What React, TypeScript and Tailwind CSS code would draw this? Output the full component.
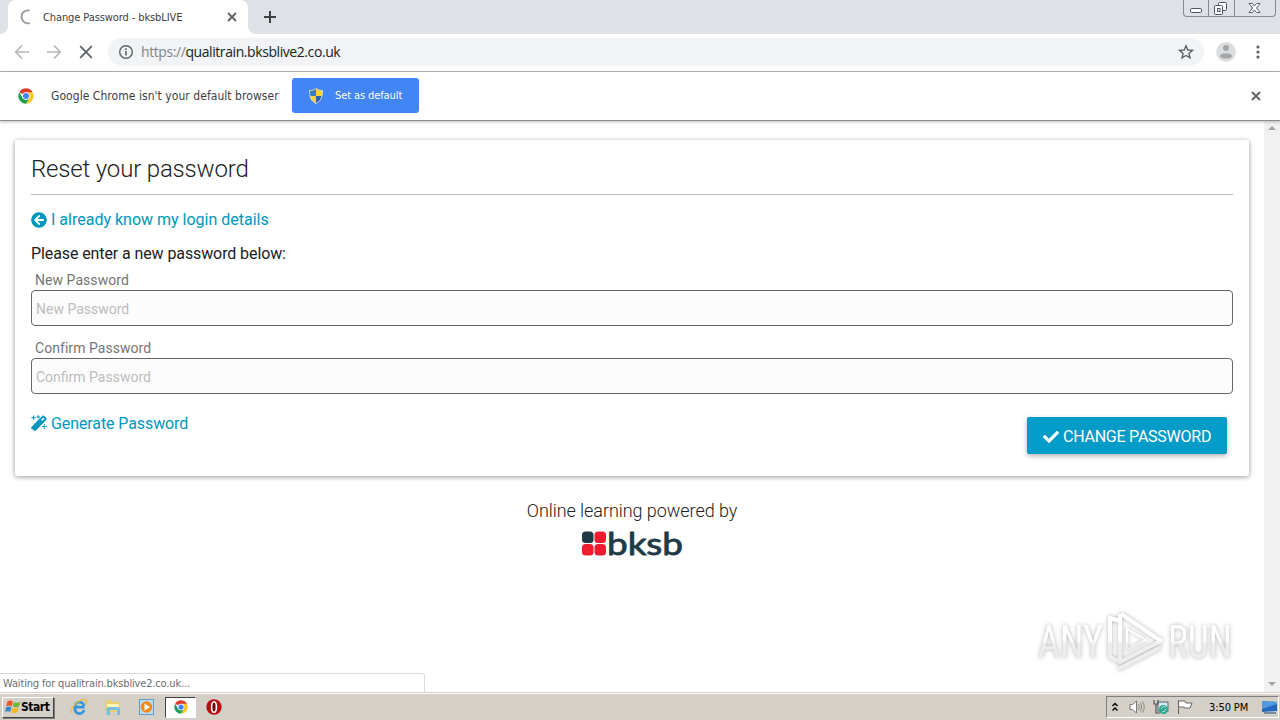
import React from 'react';
import { FaArrowCircleLeft, FaCheck } from 'react-icons/fa';

const ChromeLogo: React.FC<{ className?: string }> = ({ className }) => (
  <svg viewBox="0 0 48 48" className={className}>
    <circle cx="24" cy="24" r="23" fill="#fff" />
    <path d="M24 24 L4.1 12.5 A23 23 0 0 1 43.9 12.5 Z" fill="#dd3b2e" />
    <path d="M24 12.5 H43.9 A23 23 0 0 1 24 47 L34 29.7 Z" fill="#fbc91d" />
    <path d="M4.1 12.5 L14 29.7 L24 35.5 L34 29.7 L24 47 A23 23 0 0 1 4.1 12.5 Z" fill="#1f9d55" />
    <circle cx="24" cy="24" r="11.5" fill="#fff" />
    <circle cx="24" cy="24" r="9" fill="#4285f4" />
  </svg>
);

const ShieldIcon: React.FC = () => (
  <svg viewBox="0 0 16 16" className="w-4 h-4">
    <path d="M8 .5 C6 2 4 2.4 1.5 2.5 C1.4 9 3.2 13 8 15.5 Z" fill="#2f7fc8" />
    <path d="M8 .5 C10 2 12 2.4 14.5 2.5 C14.6 9 12.8 13 8 15.5 Z" fill="#f5d33b" />
    <path d="M8 8 H1.9 C2.5 11.5 4.4 13.8 8 15.5 Z" fill="#f5d33b" />
    <path d="M8 8 H14.1 C13.5 11.5 11.6 13.8 8 15.5 Z" fill="#2267b0" />
    <path d="M8 .5 C6 2 4 2.4 1.5 2.5 C1.4 9 3.2 13 8 15.5 C12.8 13 14.6 9 14.5 2.5 C12 2.4 10 2 8 .5 Z" fill="none" stroke="#d4d9c8" />
  </svg>
);

const MagicIcon: React.FC = () => (
  <svg viewBox="0 0 16 16" className="w-4 h-4 mr-1 mb-[2px]">
    <path d="M0 12.5 L11.3 0.8 Q12.3 0 13.1 0.8 L15.3 3 Q16 3.8 15.3 4.8 L5 15.6 Q4 16.4 3 15.6 L0.4 13.6 Z" fill="#0097bf" />
    <path d="M10 4.7 L12.2 2.5 L13.5 3.8 L11.3 6 Z" fill="#fff" />
    <path d="M2.6 .5 V5 M.4 2.7 H4.9 M7.2 0 V3.5 M5.5 2 H9 M13.3 9 V14 M10.9 11.5 H15.8" stroke="#0097bf" strokeWidth="1" />
  </svg>
);

const CloseIcon: React.FC<{ className?: string }> = ({ className }) => (
  <svg viewBox="0 0 10 10" className={className}>
    <path d="M1 1 L9 9 M9 1 L1 9" stroke="currentColor" strokeWidth="1.9" />
  </svg>
);

const TabStrip: React.FC = () => (
  <div className="flex h-[34px] bg-[#dee1e6] justify-between">
    <div className="flex">
      <div className="w-2 bg-white">
        <div className="w-2 h-[34px] bg-[#dee1e6] rounded-br-lg" />
      </div>
      <div className="flex items-center w-[240px] bg-white rounded-t-lg pl-3 pr-[11px]">
        <svg viewBox="0 0 16 16" className="w-4 h-4 shrink-0">
          <path d="M9.5 1.5 A6.5 6.5 0 1 0 10 14" fill="none" stroke="#999" strokeWidth="1.8" />
        </svg>
        <span className="ml-[7px] pt-[2px] flex-1 text-[11px] tracking-[-0.1px] text-[#3c4043] whitespace-nowrap">Change Password - bksbLIVE</span>
        <CloseIcon className="w-[10px] h-[10px] text-[#5f6368]" />
      </div>
      <div className="w-2 bg-white">
        <div className="w-2 h-[34px] bg-[#dee1e6] rounded-bl-lg" />
      </div>
      <svg viewBox="0 0 12 12" className="w-3 h-3 ml-2 mt-[11px]">
        <path d="M6 0 V12 M0 6 H12" stroke="#3c4043" strokeWidth="2" />
      </svg>
    </div>
    <div className="flex h-[17px] w-[93px] mr-1 border border-t-0 border-[#858b95] rounded-b-[4px] text-[#4b5563]">
      <div className="w-[25px] border-r border-[#858b95]">
        <svg viewBox="0 0 25 16" className="w-[25px] h-4">
          <rect x="6.5" y="8.5" width="11" height="4" rx="1" fill="#fff" stroke="currentColor" />
        </svg>
      </div>
      <div className="w-[26px] border-r border-[#858b95]">
        <svg viewBox="0 0 25 16" className="w-[25px] h-4">
          <rect x="9.5" y="2.5" width="8" height="8" rx="1" fill="#fff" stroke="currentColor" />
          <rect x="5.5" y="5.5" width="8" height="9" rx="1" fill="#fff" stroke="currentColor" />
          <rect x="8.5" y="8.5" width="2.5" height="3" fill="none" stroke="currentColor" />
        </svg>
      </div>
      <svg viewBox="0 0 40 16" className="w-10 h-4">
        <path d="M14 3.5 H17.5 L19.5 6 L21.5 3.5 H25 L21.5 8 L25 12.5 H21.5 L19.5 10 L17.5 12.5 H14 L17.5 8 Z" fill="#fff" stroke="currentColor" strokeWidth="0.9" />
      </svg>
    </div>
  </div>
);

const Toolbar: React.FC = () => (
  <div className="flex items-center h-[38px] pb-px bg-white border-b border-[#b1b1b3]">
    <svg viewBox="0 0 16 16" className="w-4 h-4 ml-[14px]">
      <path d="M15 8 H2 M8 1.5 L1.7 8 L8 14.5" fill="none" stroke="#b5b7ba" strokeWidth="1.7" />
    </svg>
    <svg viewBox="0 0 16 16" className="w-4 h-4 ml-4">
      <path d="M1 8 H14 M8 1.5 L14.3 8 L8 14.5" fill="none" stroke="#b5b7ba" strokeWidth="1.7" />
    </svg>
    <svg viewBox="0 0 14 14" className="w-[14px] h-[14px] ml-[17px]">
      <path d="M1.2 1.2 L12.8 12.8 M12.8 1.2 L1.2 12.8" stroke="#5f6368" strokeWidth="1.8" />
    </svg>
    <div className="flex items-center h-7 w-[1096px] ml-[15px] bg-[#f1f3f4] rounded-full px-[10px]">
      <svg viewBox="0 0 16 16" className="w-4 h-4">
        <circle cx="8" cy="8" r="6.3" fill="none" stroke="#5f6368" strokeWidth="1.4" />
        <path d="M8 7 V11.5 M8 4.3 V5.9" stroke="#5f6368" strokeWidth="1.6" />
      </svg>
      <span className="ml-[7px] pb-px flex-1 font-['Open_Sans',sans-serif] [font-stretch:normal] text-[14px] tracking-[-0.42px] text-[#202124]">
        <span className="text-[#80868b]">https://</span>qualitrain.bksblive2.co.uk
      </span>
      <svg viewBox="0 0 16 16" className="w-4 h-4">
        <path d="M8 1.8 L9.8 6 L14.4 6.4 L10.9 9.4 L12 13.9 L8 11.5 L4 13.9 L5.1 9.4 L1.6 6.4 L6.2 6 Z" fill="none" stroke="#5f6368" strokeWidth="1.4" />
      </svg>
    </div>
    <svg viewBox="0 0 20 20" className="w-5 h-5 ml-3">
      <circle cx="10" cy="10" r="10" fill="#dcdddf" />
      <circle cx="10" cy="6" r="3" fill="#a3a5a8" />
      <ellipse cx="10" cy="14" rx="6" ry="2.8" fill="#a3a5a8" />
    </svg>
    <svg viewBox="0 0 4 14" className="w-1 h-[14px] ml-[20px]">
      <circle cx="2" cy="2" r="1.6" fill="#5f6368" />
      <circle cx="2" cy="7" r="1.6" fill="#5f6368" />
      <circle cx="2" cy="12" r="1.6" fill="#5f6368" />
    </svg>
  </div>
);

const DefaultBrowserBar: React.FC = () => (
  <div className="relative z-10 flex items-center h-[49px] pb-px bg-white border-b border-[#8b8b8b] shadow-[0_1px_3px_rgba(0,0,0,0.25)] pl-[18px] pr-[19px]">
    <ChromeLogo className="w-4 h-4" />
    <span className="ml-[17px] w-[241px] text-[12px] tracking-[0.05px] text-[#3c4043] whitespace-nowrap">Google Chrome isn't your default browser</span>
    <button className="flex items-center w-[127px] h-[35px] bg-[#4285f4] rounded-[3px] pl-4 text-white">
      <ShieldIcon />
      <span className="ml-[11px] pt-px text-[11px] tracking-[-0.1px] whitespace-nowrap">Set as default</span>
    </button>
    <CloseIcon className="w-[10px] h-[10px] ml-auto text-[#5f6368]" />
  </div>
);

const fields = ['New Password', 'Confirm Password'];

const ResetCard: React.FC = () => (
  <div className="w-[1234px] h-[336px] ml-[15px] mt-[19px] px-4 bg-white rounded-[2px] shadow-[0_1px_5px_rgba(0,0,0,0.42)] font-[Roboto,sans-serif] [font-stretch:normal]">
    <h1 className="h-[55px] pt-[11px] border-b border-[#bdbdbd] text-2xl leading-9 tracking-[-0.17px] font-light text-[#212121]">Reset your password</h1>
    <a className="flex items-center h-6 mt-[13px] text-[#0097bf]">
      <FaArrowCircleLeft className="w-4 h-4 mr-1 mb-px" />
      I already know my login details
    </a>
    <p className="mt-[10px] h-6 leading-6 tracking-[-0.1px] text-[#212121]">Please enter a new password below:</p>
    {fields.map((label) => (
      <div key={label} className="h-[68px] pt-1">
        <label className="block h-5 pl-1 text-sm leading-5 tracking-[0.05px] text-[#757575]">{label}</label>
        <input
          type="password"
          placeholder={label}
          className="block w-full h-9 px-1 pt-[2px] bg-[#fcfcfc] border border-[#666] rounded-[4px] text-sm placeholder:text-[#bdbdbd]"
        />
      </div>
    ))}
    <div className="flex justify-between">
      <a className="flex items-center h-6 mt-[10px] tracking-[-0.1px] text-[#0097bf]">
        <MagicIcon />
        Generate Password
      </a>
      <button className="flex items-center w-[200px] h-[37px] mt-[15px] mr-[6px] pl-4 pt-[2px] bg-[#039bc7] rounded-[2px] shadow-[0_2px_5px_rgba(0,0,0,0.3)] text-white tracking-[-0.24px] whitespace-nowrap">
        <FaCheck className="w-4 h-4 mr-1" />
        CHANGE PASSWORD
      </button>
    </div>
  </div>
);

const BksbLogo: React.FC = () => (
  <svg viewBox="0 0 102 28" className="w-[102px] h-7 overflow-visible">
    <rect x="1" y="1.5" width="11.5" height="11.5" rx="3.5" fill="#1e3a47" />
    <rect x="13.5" y="1.5" width="11.5" height="11.5" rx="3.5" fill="#ee1c2e" />
    <rect x="1" y="14" width="11.5" height="11.5" rx="3.5" fill="#ee1c2e" />
    <rect x="13.5" y="14" width="11.5" height="11.5" rx="3.5" fill="#ee1c2e" />
    <text x="26" y="25" textLength="76" lengthAdjust="spacingAndGlyphs" fill="#1e3a47" stroke="#1e3a47" strokeWidth="0.8" className="font-[Lato,sans-serif] [font-stretch:normal] font-normal text-[31px]">bksb</text>
  </svg>
);

const Watermark: React.FC = () => (
  <svg viewBox="0 0 210 70" className="absolute left-[1030px] top-[605px] w-[210px] h-[70px] overflow-visible drop-shadow-[0_0_2px_rgba(0,0,0,0.3)]">
    <defs>
      <linearGradient id="fade" gradientUnits="userSpaceOnUse" x1="0" y1="0" x2="0" y2="70">
        <stop offset="0.5" stopColor="#fff" />
        <stop offset="0.56" stopColor="#ededed" />
      </linearGradient>
    </defs>
    <g fill="url(#fade)" className="font-[Roboto,sans-serif] font-normal text-[46px]">
      <text x="8" y="53" textLength="65" lengthAdjust="spacingAndGlyphs">ANY</text>
      <text x="138" y="53" textLength="64" lengthAdjust="spacingAndGlyphs">RUN</text>
    </g>
    <g fill="none" stroke="url(#fade)" strokeWidth="4" strokeLinejoin="round">
      <path d="M90 16 L80 13 V52 L88 56" />
      <path d="M90 9 V57 L131 36 L91 9" />
      <path d="M88 64 L131 42" />
      <path d="M97 24 V45 L116 35 Z" strokeWidth="2" />
    </g>
  </svg>
);

const Taskbar: React.FC = () => (
  <div className="flex items-center h-[27px] bg-[#d4d0c8] border-t border-white shadow-[0_-1px_0_#d4d0c8] text-black">
    <button className="flex items-center w-[52px] h-[21px] ml-[2px] pl-[2px] bg-[#d4d0c8] border border-t-white border-l-white border-r-[#404040] border-b-[#404040] shadow-[1px_1px_0_#808080]">
      <svg viewBox="0 0 16 16" className="w-4 h-4 shrink-0">
        <path d="M2.5 2.5 C5 1 6 1.5 8 2.5 L6.7 7.3 C5 6.3 3.5 6.3 1.2 7.5 Z" fill="#e8562a" />
        <path d="M9 3 C11 4 13 4 15.5 2.7 L14 7.5 C12 8.7 10 8.5 7.7 7.6 Z" fill="#70b73c" />
        <path d="M1 8.4 C3 7.3 5 7.2 6.5 8.2 L5.2 13 C3.5 12 2 12 0 13 Z" fill="#3d85cc" />
        <path d="M7.5 8.6 C9.5 9.6 11.5 9.8 13.7 8.5 L12.3 13.3 C10 14.5 8 14.3 6.1 13.3 Z" fill="#f4b629" />
      </svg>
      <span className="text-[12px] font-bold tracking-[-0.45px]">Start</span>
    </button>
    <svg viewBox="0 0 18 18" className="w-[18px] h-[18px] ml-4">
      <path d="M14.5 9.2 H5 A4.5 4.5 0 0 1 14 8 M5 10 A4.5 4.5 0 0 0 14 12" fill="none" stroke="#3397dd" strokeWidth="2.8" />
      <path d="M2 15 C-2 12 9 0 16 2 C18 3 16 6 15 7" fill="none" stroke="#edbb3f" strokeWidth="1.3" />
    </svg>
    <svg viewBox="0 0 18 18" className="w-[18px] h-[18px] ml-4">
      <path d="M2 2 H7 L8 4 H16 V14 H2 Z" fill="#edcf70" />
      <path d="M3 6 H15 V9 H3 Z" fill="#fff4bd" />
      <path d="M2.5 17 V11 Q2.5 9 4.5 9 H14 Q16 9 16 11 V17 H13 V12 H6 V17 Z" fill="#79bfe4" />
    </svg>
    <svg viewBox="0 0 18 18" className="w-[18px] h-[18px] ml-4">
      <rect x="1.5" y="1.5" width="14" height="15" fill="#bcdcf4" stroke="#5e9ccb" />
      <circle cx="8.5" cy="9" r="5.8" fill="#f28a1c" />
      <path d="M6.5 5.5 L12 9 L6.5 12.5 Z" fill="#fff" />
    </svg>
    <div className="flex items-center justify-center w-[31px] h-[21px] ml-[9px] bg-white border border-t-[#404040] border-l-[#404040] border-r-white border-b-white">
      <ChromeLogo className="w-[14px] h-[14px]" />
    </div>
    <svg viewBox="0 0 16 16" className="w-4 h-4 ml-[10px]">
      <circle cx="8" cy="8" r="7.7" fill="#b70e12" />
      <ellipse cx="8" cy="8" rx="2.4" ry="5.3" fill="#7b0608" stroke="#fff" strokeWidth="1.6" />
    </svg>
    <div className="flex items-center h-[22px] w-[173px] ml-auto mr-px border border-t-[#808080] border-l-[#808080] border-r-white border-b-white">
      <svg viewBox="0 0 8 10" className="w-2 h-[10px] ml-1">
        <path d="M1.5 4 L4 1.5 L6.5 4 M1.5 8.5 L4 6 L6.5 8.5" fill="none" stroke="#000" strokeWidth="1.4" />
      </svg>
      <svg viewBox="0 0 16 16" className="w-4 h-4 ml-[10px]">
        <path d="M1 5.5 H3.5 L7.5 2 V14 L3.5 10.5 H1 Z" fill="#fff" stroke="#777" />
        <path d="M9.5 5 Q11 8 9.5 11 M11.5 3.5 Q14 8 11.5 12.5 M13.5 2.5 Q17 8 13.5 13.5" fill="none" stroke="#888" />
      </svg>
      <svg viewBox="0 0 16 16" className="w-4 h-4 ml-2">
        <rect x="5" y="3" width="10" height="9" fill="#d5e9f2" stroke="#53686f" />
        <path d="M1 1 V5 H5 V1 M3 5 V14 H7" fill="none" stroke="#555" strokeWidth="1.2" />
        <circle cx="10.5" cy="10.5" r="4.5" fill="#28a58d" />
        <path d="M8 10 Q10 6 13 8 M9 13 Q12 13 13 10" fill="none" stroke="#b8ead9" />
      </svg>
      <svg viewBox="0 0 16 16" className="w-4 h-4 ml-2">
        <path d="M1.5 1 V15 M2 2 H8 L9 4 H15 L13 9 H8 L7 8 H2" fill="#fff" stroke="#666" />
      </svg>
      <span className="ml-4 pt-[2px] text-[11px] tracking-[-0.1px] whitespace-nowrap">3:50 PM</span>
      <svg viewBox="0 0 16 14" className="w-4 h-[14px] ml-auto">
        <path d="M0 1 L15 2 V11 L0 12 Z" fill="#2569bf" />
        <path d="M0 1 L15 2 V4 L0 9 Z" fill="#5299df" />
        <path d="M2 13 H14" stroke="#234774" />
      </svg>
    </div>
  </div>
);

const App: React.FC = () => (
  <div className="relative flex flex-col w-[1280px] h-[720px] overflow-hidden bg-white font-['DejaVu_Sans_Condensed','DejaVu_Sans',sans-serif] [font-stretch:condensed]">
    <TabStrip />
    <Toolbar />
    <DefaultBrowserBar />
    <div className="flex flex-1 min-h-0">
      <main className="w-[1264px]">
        <ResetCard />
        <div className="flex flex-col items-center mt-5 font-[Roboto,sans-serif] [font-stretch:normal]">
          <p className="text-lg leading-[30px] tracking-[-0.06px] font-light text-[#212121]">Online learning powered by</p>
          <div className="mt-1">
            <BksbLogo />
          </div>
        </div>
      </main>
      <div className="flex flex-col justify-between items-center w-4 bg-[#f1f1f1] pt-[5px] pb-[7px]">
        <div className="border-x-4 border-x-transparent border-b-4 border-b-[#a3a3a3]" />
        <div className="border-x-4 border-x-transparent border-t-4 border-t-[#a3a3a3]" />
      </div>
    </div>
    <div className="absolute left-0 top-[673px] flex items-center w-[425px] h-[19px] pl-[3px] pt-[2px] bg-white border-t border-r border-[#dcdcdc] rounded-tr-[3px] text-[11px] tracking-[-0.16px] text-[#6b6e72]">
      Waiting for qualitrain.bksblive2.co.uk...
    </div>
    <Watermark />
    <Taskbar />
  </div>
);

export default App;
